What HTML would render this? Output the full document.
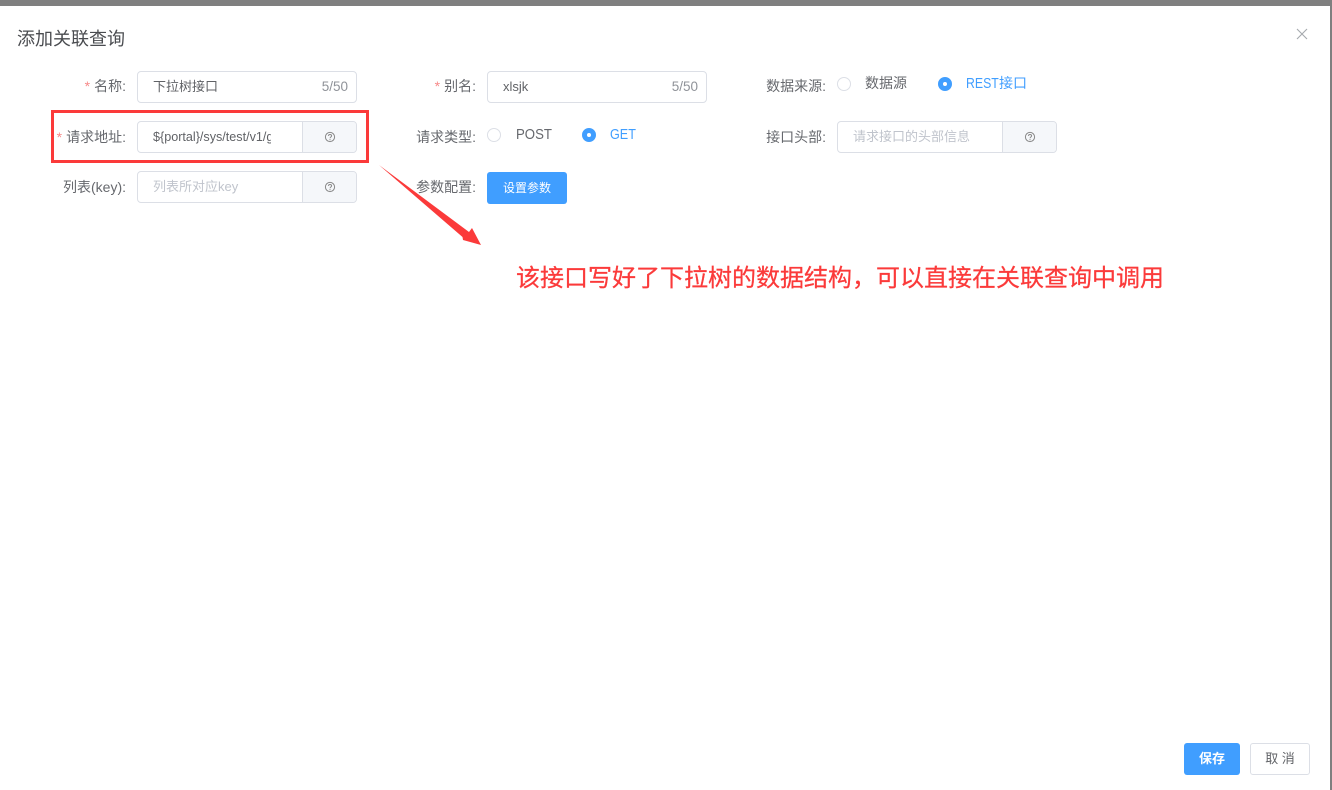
<!DOCTYPE html>
<html lang="zh">
<head>
<meta charset="utf-8">
<title>添加关联查询</title>
<style>
html,body{margin:0;padding:0;background:#7f7f7f;}
body{width:1332px;height:790px;overflow:hidden;position:relative;font-family:"Liberation Sans","Noto Sans CJK SC",sans-serif;color:#606266;}
#dlg{position:absolute;left:0;top:6px;width:1330px;height:784px;background:#fff;}
.a{position:absolute;white-space:nowrap;}
.lb{position:absolute;white-space:nowrap;font-size:14px;line-height:20px;text-align:right;color:#66686d;}
.lb i{font-style:normal;color:#f78989;margin-right:4px;}
.inp{position:absolute;box-sizing:border-box;height:32px;border:1px solid #dcdfe6;border-radius:4px;background:#fff;font-size:13px;line-height:30px;color:#606266;overflow:hidden;}
.inp .t{position:absolute;left:15px;top:0;white-space:nowrap;}
.inp .c{position:absolute;right:8px;top:0;color:#909399;font-size:13.5px;}
.inp .ph{color:#c0c4cc;}
.ap{position:absolute;right:0;top:0;bottom:0;width:53px;background:#f5f7fa;border-left:1px solid #dcdfe6;}
.ap svg{position:absolute;left:21px;top:9px;}
.r{position:absolute;box-sizing:border-box;width:14px;height:14px;border-radius:50%;border:1px solid #dcdfe6;background:#fff;}
.r.on{background:#409eff;border-color:#409eff;}
.r.on:after{content:"";position:absolute;left:4px;top:4px;width:4px;height:4px;border-radius:50%;background:#fff;}
.rt{position:absolute;white-space:nowrap;font-size:14px;line-height:20px;color:#66686d;}
.rt.on{color:#409eff;}
.sx{display:inline-block;font-size:15px;transform-origin:left center;}
.btn{position:absolute;box-sizing:border-box;border-radius:3px;font-size:12px;text-align:center;}
</style>
</head>
<body>
<div id="dlg"></div>

<div class="a" style="left:17px;top:27px;font-size:18px;line-height:24px;color:#4a4c50;">添加关联查询</div>
<svg class="a" style="left:1296px;top:28px;" width="12" height="12" viewBox="0 0 12 12"><path d="M1 1L11 11M11 1L1 11" stroke="#a6a9ad" stroke-width="1.1" fill="none"/></svg>

<div class="lb" style="right:1206px;top:76px;"><i>*</i>名称:</div>
<div class="inp" style="left:137px;top:71px;width:220px;"><span class="t">下拉树接口</span><span class="c">5/50</span></div>

<div class="lb" style="right:1206px;top:127px;"><i>*</i>请求地址:</div>
<div class="inp" style="left:137px;top:121px;width:220px;"><span class="t" style="width:118px;overflow:hidden;font-size:12.6px;">${portal}/sys/test/v1/getTree</span><span class="ap"><svg width="12" height="12" viewBox="0 0 12 12"><circle cx="6" cy="6" r="4.6" stroke="#888" stroke-width="1" fill="none"/><path d="M4.4 4.9C4.5 3.1 7.6 3.1 7.6 4.9C7.6 6 6 6 6 7.3" stroke="#888" stroke-width="1" fill="none"/><circle cx="6" cy="8.7" r=".6" fill="#888"/></svg></span></div>

<div class="lb" style="right:1206px;top:177px;">列表(key):</div>
<div class="inp" style="left:137px;top:171px;width:220px;"><span class="t ph">列表所对应key</span><span class="ap"><svg width="12" height="12" viewBox="0 0 12 12"><circle cx="6" cy="6" r="4.6" stroke="#888" stroke-width="1" fill="none"/><path d="M4.4 4.9C4.5 3.1 7.6 3.1 7.6 4.9C7.6 6 6 6 6 7.3" stroke="#888" stroke-width="1" fill="none"/><circle cx="6" cy="8.7" r=".6" fill="#888"/></svg></span></div>

<div class="a" style="left:51px;top:110px;width:318px;height:53px;box-sizing:border-box;border:3px solid #fb3a3a;"></div>

<div class="lb" style="right:856px;top:76px;"><i>*</i>别名:</div>
<div class="inp" style="left:487px;top:71px;width:220px;"><span class="t">xlsjk</span><span class="c">5/50</span></div>

<div class="lb" style="right:856px;top:127px;">请求类型:</div>
<div class="r" style="left:487px;top:128px;"></div>
<div class="rt" style="left:516px;top:124px;"><span class="sx" style="transform:scaleX(.88);">POST</span></div>
<div class="r on" style="left:582px;top:128px;"></div>
<div class="rt on" style="left:610px;top:124px;"><span class="sx" style="transform:scaleX(.84);">GET</span></div>

<div class="lb" style="right:856px;top:177px;">参数配置:</div>
<div class="btn" style="left:487px;top:172px;width:80px;height:32px;line-height:32px;background:#409eff;color:#fff;">设置参数</div>

<div class="lb" style="right:506px;top:76px;">数据来源:</div>
<div class="r" style="left:837px;top:77px;"></div>
<div class="rt" style="left:865px;top:73px;">数据源</div>
<div class="r on" style="left:938px;top:77px;"></div>
<div class="rt on" style="left:966px;top:73px;"><span class="sx" style="width:33px;transform:scaleX(.82);">REST</span>接口</div>

<div class="lb" style="right:506px;top:127px;">接口头部:</div>
<div class="inp" style="left:837px;top:121px;width:220px;"><span class="t ph">请求接口的头部信息</span><span class="ap"><svg width="12" height="12" viewBox="0 0 12 12"><circle cx="6" cy="6" r="4.6" stroke="#888" stroke-width="1" fill="none"/><path d="M4.4 4.9C4.5 3.1 7.6 3.1 7.6 4.9C7.6 6 6 6 6 7.3" stroke="#888" stroke-width="1" fill="none"/><circle cx="6" cy="8.7" r=".6" fill="#888"/></svg></span></div>

<svg class="a" style="left:0;top:0;" width="1332" height="790" viewBox="0 0 1332 790"><polygon points="379,165 469,232 472,228 481,245 463,240 462.500,237" fill="#fb3a3a"/></svg>

<div class="a" style="left:516px;top:264px;font-size:24px;line-height:30px;color:#fb3a3a;-webkit-text-stroke:.25px #fb3a3a;">该接口写好了下拉树的数据结构，可以直接在关联查询中调用</div>

<div class="btn" style="left:1184px;top:743px;width:56px;height:32px;line-height:32px;background:#409eff;color:#fff;font-size:13px;font-weight:bold;">保存</div>
<div class="btn" style="left:1250px;top:743px;width:60px;height:32px;line-height:30px;background:#fff;border:1px solid #dcdfe6;color:#606266;font-size:13px;">取 消</div>
</body>
</html>
